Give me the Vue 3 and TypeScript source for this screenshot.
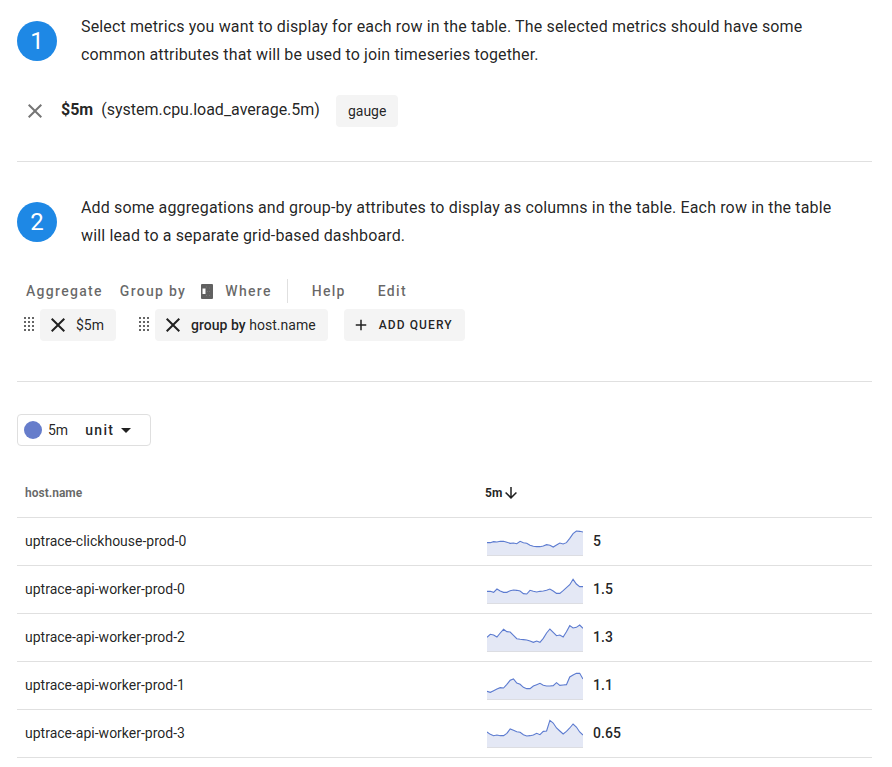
<script setup lang="ts">
interface Row {
  host: string
  value: string
  load: number[]
}

const rows: Row[] = [
  { host: 'uptrace-clickhouse-prod-0', value: '5', load: [37, 37, 40, 39, 41, 41, 38, 35, 36, 34, 41, 37, 35, 29, 26, 25, 25, 27, 31, 29, 24, 30, 36, 33, 37, 50, 64, 72, 71, 69] },
  { host: 'uptrace-api-worker-prod-0', value: '1.5', load: [35, 35, 32, 42, 36, 32, 32, 37, 39, 38, 36, 28, 27, 38, 35, 33, 35, 36, 38, 42, 36, 29, 29, 37, 46, 55, 71, 57, 49, 49] },
  { host: 'uptrace-api-worker-prod-2', value: '1.3', load: [41, 50, 48, 42, 54, 65, 58, 57, 47, 37, 35, 34, 33, 30, 26, 30, 26, 38, 54, 66, 56, 46, 48, 42, 58, 76, 69, 71, 78, 68] },
  { host: 'uptrace-api-worker-prod-1', value: '1.1', load: [23, 20, 25, 30, 34, 33, 44, 56, 60, 48, 44, 35, 31, 31, 39, 43, 47, 41, 39, 39, 40, 49, 41, 42, 43, 66, 72, 77, 77, 60] },
  { host: 'uptrace-api-worker-prod-3', value: '0.65', load: [45, 38, 34, 36, 34, 34, 41, 54, 50, 46, 44, 37, 33, 34, 36, 41, 37, 47, 48, 80, 72, 57, 48, 39, 47, 57, 69, 60, 45, 36] },
]

const width = 96
const height = 30

function line(load: number[]): string {
  return load
    .map((v, i) => `${((i * width) / (load.length - 1)).toFixed(2)},${(height - v / 3).toFixed(2)}`)
    .join(' ')
}

function area(load: number[]): string {
  return `0,${height} ${line(load)} ${width},${height}`
}
</script>

<template>
  <main class="page">
    <section class="step">
      <div class="badge">1</div>
      <p>
        Select metrics you want to display for each row in the table. The selected metrics should have some
        common attributes that will be used to join timeseries together.
      </p>
    </section>

    <div class="metric">
      <svg class="close" viewBox="0 0 24 24"><path d="M19 6.41 17.59 5 12 10.59 6.41 5 5 6.41 10.59 12 5 17.59 6.41 19 12 13.41 17.59 19 19 17.59 13.41 12z" /></svg>
      <span class="metric-name"><b>$5m</b><span>(system.cpu.load_average.5m)</span></span>
      <span class="chip">gauge</span>
    </div>
    <hr />

    <section class="step second">
      <div class="badge">2</div>
      <p>
        Add some aggregations and group-by attributes to display as columns in the table. Each row in the table
        will lead to a separate grid-based dashboard.
      </p>
    </section>

    <nav class="menu">
      <span class="aggregate">Aggregate</span>
      <span class="group">Group by</span>
      <svg class="where-icon" viewBox="0 0 12 15">
        <path fill-rule="evenodd" d="M1 0h10a1 1 0 0 1 1 1v13a1 1 0 0 1-1 1H1a1 1 0 0 1-1-1V1a1 1 0 0 1 1-1zM1.500 4.500v5.500h3V4.500z" />
        <path fill="#777" d="M5 2.500h1v1H5zM8 3.500h1v1H8zM6 7h1v1H6zM8 7h1v1H8zM5 11h1v1H5zM8 11h1v1H8z" />
      </svg>
      <span class="where">Where</span>
      <i class="divider"></i>
      <span class="help">Help</span>
      <span>Edit</span>
    </nav>

    <div class="query">
      <svg class="drag" viewBox="0 0 10 14"><template v-for="y in 4" :key="y"><rect v-for="x in 3" :key="x" :x="(x - 1) * 4" :y="(y - 1) * 4" width="2" height="2" /></template></svg>
      <div class="part">
        <svg viewBox="0 0 24 24"><path d="M19 6.41 17.59 5 12 10.59 6.41 5 5 6.41 10.59 12 5 17.59 6.41 19 12 13.41 17.59 19 19 17.59 13.41 12z" /></svg>
        <span>$5m</span>
      </div>
      <svg class="drag next" viewBox="0 0 10 14"><template v-for="y in 4" :key="y"><rect v-for="x in 3" :key="x" :x="(x - 1) * 4" :y="(y - 1) * 4" width="2" height="2" /></template></svg>
      <div class="part grouping">
        <svg viewBox="0 0 24 24"><path d="M19 6.41 17.59 5 12 10.59 6.41 5 5 6.41 10.59 12 5 17.59 6.41 19 12 13.41 17.59 19 19 17.59 13.41 12z" /></svg>
        <span><b>group by</b> host.name</span>
      </div>
      <button class="add">
        <svg viewBox="0 0 24 24"><path d="M19 13h-6v6h-2v-6H5v-2h6V5h2v6h6z" /></svg>
        <span>ADD QUERY</span>
      </button>
    </div>
    <hr />

    <div class="unit-box">
      <i class="dot"></i>
      <span class="unit-name">5m</span>
      <span class="unit">unit</span>
      <svg viewBox="0 0 24 24"><path d="m7 10 5 5 5-5z" /></svg>
    </div>

    <table>
      <thead>
        <tr>
          <th>host.name</th>
          <th class="sorted">
            <span class="sort">5m<svg viewBox="0 0 24 24"><path d="M11 4h2v12l5.500-5.500 1.420 1.420L12 19.840l-7.920-7.920L5.500 10.500 11 16z" /></svg></span>
          </th>
        </tr>
      </thead>
      <tbody>
        <tr v-for="row in rows" :key="row.host">
          <td>{{ row.host }}</td>
          <td>
            <div class="value">
              <svg viewBox="0 0 96 31">
                <polygon :points="area(row.load)" fill="#e4e8f5" />
                <polyline :points="line(row.load)" fill="none" stroke="#5c7bd0" stroke-width="1.1" />
                <rect y="30" width="96" height="1" fill="#dcdde2" />
              </svg>
              <span>{{ row.value }}</span>
            </div>
          </td>
        </tr>
      </tbody>
    </table>
  </main>
</template>

<style>
body {
  margin: 0;
  background: #fff;
}
</style>

<style scoped>
.page {
  box-sizing: border-box;
  width: 892px;
  height: 767px;
  overflow: hidden;
  padding: 13px 20px 0 17px;
  font-family: Roboto, 'Liberation Sans', sans-serif;
  font-size: 14px;
  color: rgba(0, 0, 0, 0.87);
}
.step {
  display: flex;
  align-items: center;
  gap: 24px;
  height: 56px;
}
.step p {
  margin: 0;
  width: 760px;
  font-size: 16px;
  line-height: 28px;
  letter-spacing: 0.143px;
}
.badge {
  flex: none;
  width: 40px;
  height: 40px;
  border-radius: 50%;
  background: #1e88e5;
  color: #fff;
  font-size: 24px;
  line-height: 40px;
  text-align: center;
}
.metric {
  display: flex;
  align-items: center;
  height: 32px;
  margin: 26px 0 34px 6px;
}
.close {
  width: 24px;
  height: 24px;
  fill: #757575;
}
.metric-name {
  margin: -3px 16px 0 14px;
  font-size: 16px;
}
.metric-name span {
  margin-left: 8px;
}
.chip {
  padding: 0 12px;
  border-radius: 4px;
  background: #f4f4f4;
  line-height: 32px;
}
hr {
  height: 1px;
  margin: 0;
  border: 0;
  background: #e0e0e0;
}
.second {
  margin-top: 32px;
}
.menu {
  display: flex;
  align-items: center;
  height: 24px;
  margin: 29px 0 0 9px;
  font-weight: 500;
  letter-spacing: 1.3px;
  color: rgba(0, 0, 0, 0.6);
}
.group {
  margin: 0 15px 0 17px;
}
.where-icon {
  width: 12px;
  height: 15px;
  margin-right: 12px;
  fill: #616161;
}
.divider {
  width: 1px;
  height: 24px;
  margin: 0 24px 0 15px;
  background: #e0e0e0;
}
.help {
  margin-right: 32px;
}
.query {
  display: flex;
  align-items: center;
  height: 32px;
  margin: 6px 0 40px 7px;
}
.drag {
  width: 10px;
  height: 14px;
  margin: -2px 6px 0 0;
  fill: #666;
  shape-rendering: crispEdges;
}
.next {
  margin-left: 23px;
}
.part {
  display: flex;
  align-items: center;
  height: 32px;
  padding: 0 12px 0 6px;
  border-radius: 4px;
  background: #f4f4f4;
}
.grouping {
  letter-spacing: 0.03px;
}
.part svg {
  width: 24px;
  height: 24px;
  margin-right: 6px;
  fill: #212121;
}
.part b {
  font-weight: 500;
}
.add {
  display: flex;
  align-items: center;
  height: 32px;
  margin-left: 16px;
  padding: 0 12px 0 8px;
  border: 0;
  border-radius: 4px;
  background: #f4f4f4;
  font: 500 12px Roboto, sans-serif;
  letter-spacing: 1.1px;
  color: inherit;
}
.add svg {
  width: 18px;
  height: 18px;
  margin-right: 9px;
  fill: #212121;
}
.unit-box {
  box-sizing: border-box;
  display: flex;
  align-items: center;
  width: 134px;
  height: 32px;
  margin-top: 32px;
  padding-left: 6px;
  border: 1px solid #dfdfdf;
  border-radius: 4px;
}
.dot {
  width: 18px;
  height: 18px;
  margin-right: 6px;
  border-radius: 50%;
  background: #667dcb;
}
.unit {
  margin-left: 17px;
  font-weight: 500;
  letter-spacing: 1.35px;
}
.unit-box svg {
  width: 24px;
  height: 24px;
}
table {
  width: 100%;
  margin-top: 23px;
  border-collapse: separate;
  border-spacing: 0;
  table-layout: fixed;
}
th,
td {
  padding: 0 8px;
  border-bottom: 1px solid #e0e0e0;
  text-align: left;
}
td {
  height: 45px;
  padding-bottom: 2px;
}
th {
  height: 48px;
  font-size: 12px;
  color: rgba(0, 0, 0, 0.6);
}
th:first-child {
  width: 444px;
}
.sorted {
  color: rgba(0, 0, 0, 0.87);
}
.sort {
  display: flex;
  align-items: center;
}
.sort svg {
  width: 18px;
  height: 18px;
}
.sort svg,
.unit-box svg {
  fill: #212121;
}
.value {
  display: flex;
  align-items: center;
  font-weight: 500;
}
.value svg {
  width: 96px;
  height: 31px;
  margin: 0 10px 0 2px;
}
.value span {
  letter-spacing: 0.1px;
}
</style>
